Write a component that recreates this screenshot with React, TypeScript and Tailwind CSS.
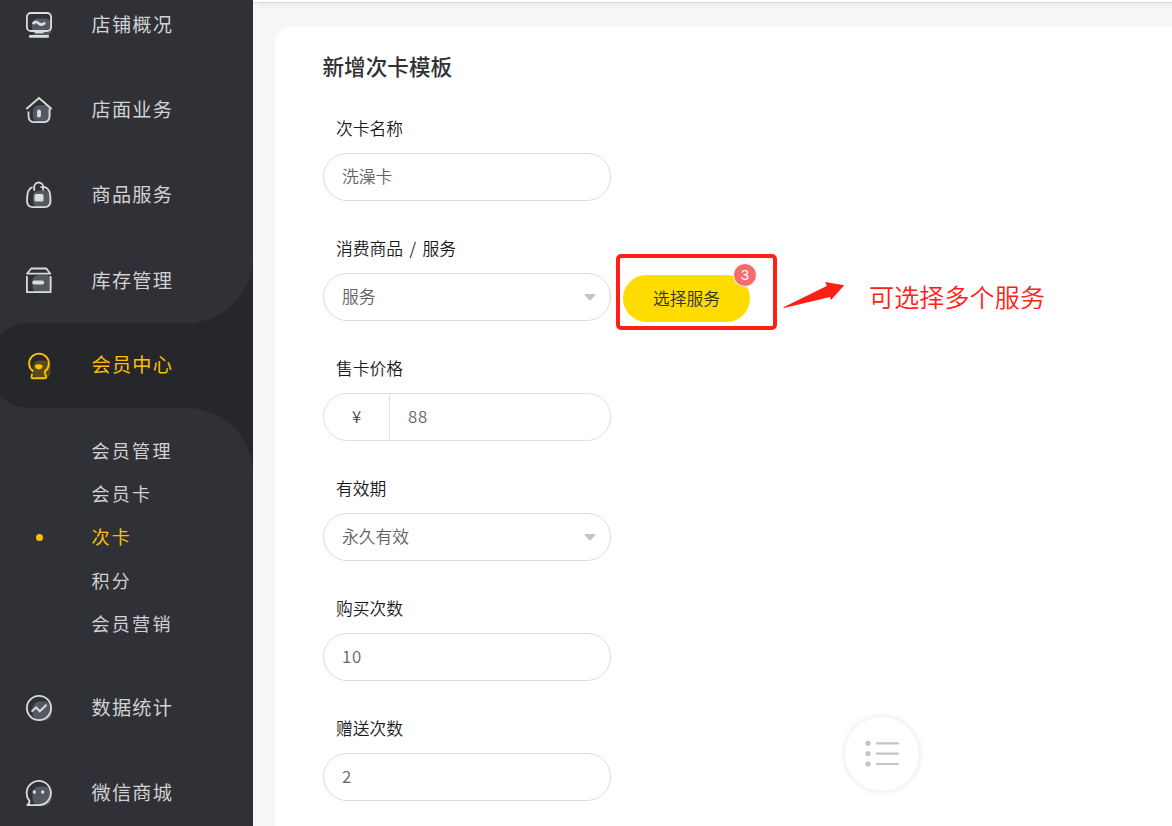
import { ReactNode } from "react";

const menuTop = [
  { label: "店铺概况", icon: "monitor" },
  { label: "店面业务", icon: "house" },
  { label: "商品服务", icon: "bag" },
  { label: "库存管理", icon: "box" },
];

const subMenu = ["会员管理", "会员卡", "次卡", "积分", "会员营销"];

const menuBottom = [
  { label: "数据统计", icon: "chart" },
  { label: "微信商城", icon: "chat" },
];

function MenuIcon({ name }: { name: string }) {
  return (
    <svg width="28" height="28" viewBox="0 0 28 28" fill="none" stroke="#dcdcdc" strokeWidth="1.8" className="shrink-0">
      {name === "monitor" && (
        <>
          <rect x="7" y="7.5" width="19.5" height="17.5" rx="6" fill="#535960" stroke="none" />
          <rect x="1.9" y="2" width="24.2" height="18" rx="4" />
          <path d="M8 13.2c1.7-3.4 3.6-2.4 5.600-.9s4.500 2.500 6.200-.9" strokeWidth="2.8" />
          <path d="M10 21.2h8.500" strokeWidth="2.2" />
          <path d="M5.200 25.400h17.600" strokeWidth="2.6" strokeLinecap="round" />
        </>
      )}
      {name === "house" && (
        <>
          <rect x="8" y="9" width="18" height="17" rx="6" fill="#535960" stroke="none" />
          <path d="M1.300 13L14 2l12.700 11" />
          <path d="M3.500 15.500V20q0 6.200 6 6.200h9q6 0 6-6.200v-7.500" />
          <path d="M14 15.500v4" strokeWidth="3.8" strokeLinecap="round" />
        </>
      )}
      {name === "bag" && (
        <>
          <rect x="8" y="9.5" width="18.5" height="17" rx="6" fill="#535960" stroke="none" />
          <path d="M7.500 6.200C4 7 2 12 2 19.500c0 4.500 2 6.700 6 6.700h11.500c4 0 6-2.200 6-6.700C25.500 12 23.500 7 20 6.200h-4.500" />
          <path d="M9.200 9.800V6a4.500 4.500 0 0 1 9 0v3.500" />
          <rect x="9.5" y="13" width="9" height="7.5" rx="1.5" fill="#dcdcdc" stroke="none" />
        </>
      )}
      {name === "box" && (
        <>
          <rect x="7.5" y="9" width="19.2" height="18" rx="6" fill="#535960" stroke="none" />
          <path d="M2 7.700L6.200 2.500h15.100l4 5.200z" strokeLinejoin="round" />
          <path d="M1.900 10v16.200h23.700V10" strokeLinejoin="round" />
          <path d="M9.200 16.500h8" strokeWidth="3.8" strokeLinecap="round" />
        </>
      )}
      {name === "member" && (
        <>
          <rect x="8" y="8.5" width="17.5" height="18" rx="6" fill="#5a4a1e" stroke="none" />
          <path
            d="M8.300 19.600A9.900 9.900 0 1 1 19.700 19.600q.3 2.700 1.300 4.400.6 2.200-1 2.200H7.800q-1.600 0-1.200-2l.6-2.500"
            stroke="#fdc004"
            strokeWidth="1.9"
            strokeLinejoin="round"
          />
          <path d="M10 13.200q4-2 7.500 0 .3 3.800-3.700 4.300-4-.6-3.800-4.300z" fill="#fdc004" stroke="none" />
        </>
      )}
      {name === "chart" && (
        <>
          <rect x="7.5" y="7.5" width="19.2" height="19" rx="7" fill="#535960" stroke="none" />
          <circle cx="14" cy="14" r="12.1" />
          <path d="M6.500 17.500l4.700-4 3.600 3.800 6.700-6.600" strokeWidth="2" />
        </>
      )}
      {name === "chat" && (
        <>
          <rect x="7.5" y="7.5" width="19.2" height="19" rx="7" fill="#535960" stroke="none" />
          <path d="M4.500 21.800A12.100 12.100 0 1 1 14 26.100H1.800q3-1.200 2.700-4.300z" />
          <circle cx="9.3" cy="13" r="1.7" fill="#dcdcdc" stroke="none" />
          <circle cx="17.7" cy="13" r="1.7" fill="#dcdcdc" stroke="none" />
        </>
      )}
    </svg>
  );
}

function MenuItem({ label, icon }: { label: string; icon: string }) {
  return (
    <div className="flex h-[85.25px] items-center gap-[38.5px] pl-[25px] text-[19.2px] tracking-[1.2px] text-[#d2d2d3]">
      <MenuIcon name={icon} />
      <span className={icon === "box" ? "" : "-mt-px"}>{label}</span>
    </div>
  );
}

function Sidebar() {
  return (
    <aside className="h-full w-[253px] shrink-0 overflow-hidden bg-[#303136] font-normal">
      <div className="bg-[#26272b]">
        <div className="-mt-[18px] rounded-br-[66px] bg-[#303136]">
          {menuTop.map((m) => (
            <MenuItem key={m.label} label={m.label} icon={m.icon} />
          ))}
        </div>
      </div>

      <div className="-ml-[13px] flex h-[85px] items-center gap-[38.5px] rounded-l-full bg-[#26272b] pl-[38px] text-[19.2px] tracking-[1.2px] text-[#fdc004]">
        <MenuIcon name="member" />
        <span className="-mt-[3px]">会员中心</span>
      </div>

      <div className="bg-[#26272b]">
        <div className="h-[257px] rounded-tr-[66px] bg-[#303136] pt-[21px]">
          {subMenu.map((s) => (
            <div
              key={s}
              className={`flex h-[43.2px] items-center text-[18px] tracking-[2.3px] ${s === "次卡" ? "text-[#fdc004]" : "text-[#d2d2d3]"}`}
            >
              <span className="flex w-[91.5px] pt-[2px] pl-[36px]">
                {s === "次卡" && <i className="h-[7px] w-[7px] rounded-full bg-[#fdc004]" />}
              </span>
              {s}
            </div>
          ))}
        </div>
      </div>

      {menuBottom.map((m) => (
        <MenuItem key={m.label} label={m.label} icon={m.icon} />
      ))}
    </aside>
  );
}

function Field({ label, children }: { label: string; children: ReactNode }) {
  return (
    <div className="h-[120px]">
      <div className="flex h-[48px] items-center pl-[13px] text-[16.8px] [word-spacing:2.7px] text-[#1a1a1a]">{label}</div>
      {children}
    </div>
  );
}

function Input({ value, select }: { value: string; select?: boolean }) {
  return (
    <div className="flex h-[48px] w-[288px] items-center justify-between rounded-full border border-[#dcdcde] pr-[14px] pl-[18px] text-[16.8px] text-[#606266]">
      <span className={/^\d+$/.test(value) ? "tracking-[0.8px]" : ""}>{value}</span>
      {select && (
        <svg width="12" height="7" viewBox="0 0 12 7">
          <path d="M0 0h12L6 7z" fill="#c0c4cc" />
        </svg>
      )}
    </div>
  );
}

export default function App() {
  return (
    <div className="flex h-[826px] w-[1172px] overflow-hidden bg-[#f6f6f6] font-['Noto_Sans_CJK_SC',sans-serif] font-[350]">
      <Sidebar />

      <div className="flex min-w-0 flex-1 flex-col">
        <header className="h-[3px] shrink-0 border-b border-[#dadada] bg-white shadow-[4px_2px_5px_rgba(0,0,0,0.08)]" />

        <main className="relative mt-[24px] ml-[22px] flex-1 rounded-tl-[16px] bg-white pt-[23px] pl-[48px]">
          <h1 className="-ml-[0.5px] h-[55px] text-[21.6px] leading-[32px] font-medium text-[#303133]">新增次卡模板</h1>

          <Field label="次卡名称">
            <Input value="洗澡卡" />
          </Field>

          <Field label="消费商品 / 服务">
            <div className="flex">
              <Input value="服务" select />
              {/* botón con contador y marco rojo */}
              <div className="relative -mt-[19px] ml-[5px] h-[76px] w-[161px] rounded-[5px] border-4 border-[#ff2015] pt-[17px] pl-[3px]">
                <button className="block h-[47px] w-[127px] rounded-full bg-[#ffdc00] text-[16.8px] text-[#333]">选择服务</button>
                <span className="absolute top-[5px] left-[113px] flex h-[24px] w-[24px] items-center justify-center rounded-full border border-white bg-[#f56c6c] font-['Liberation_Sans',sans-serif] text-[15px] font-normal text-white">
                  3
                </span>
              </div>
              <svg width="64" height="30" viewBox="0 0 64 30" className="mt-[7px] ml-[5px] shrink-0">
                <path d="M1 27.500L44.700 6 43.300 2l19 3.300L49 20l-1-3L2 28z" fill="#ff2015" />
              </svg>
              <span className="mt-[4px] ml-[23px] text-[25px] leading-[38px] tracking-[0.15px] whitespace-nowrap text-[#ff2015]">可选择多个服务</span>
            </div>
          </Field>

          <Field label="售卡价格">
            <div className="flex h-[48px] w-[288px] items-stretch rounded-full border border-[#dcdfe6] text-[16.8px] text-[#606266]">
              <span className="flex w-[66px] items-center justify-center border-r border-[#dcdfe6] text-[#444]">¥</span>
              <span className="flex items-center pl-[18px] tracking-[0.8px]">88</span>
            </div>
          </Field>

          <Field label="有效期">
            <Input value="永久有效" select />
          </Field>

          <Field label="购买次数">
            <Input value="10" />
          </Field>

          <Field label="赠送次数">
            <Input value="2" />
          </Field>

          {/* botón flotante */}
          <button className="absolute top-[690px] left-[570px] flex h-[74px] w-[74px] items-center justify-center rounded-full bg-white shadow-[0_0_7px_rgba(0,0,0,0.12)]">
            <svg width="36" height="28" viewBox="0 0 36 28">
              <g fill="#c3c3c3">
                <circle cx="4" cy="3.3" r="2.6" />
                <circle cx="4" cy="13.6" r="2.6" />
                <circle cx="4" cy="24" r="2.6" />
              </g>
              <path d="M13 3.300h21M13 13.600h21M13 24h21" stroke="#c3c3c3" strokeWidth="2.2" strokeLinecap="round" />
            </svg>
          </button>
        </main>
      </div>
    </div>
  );
}
